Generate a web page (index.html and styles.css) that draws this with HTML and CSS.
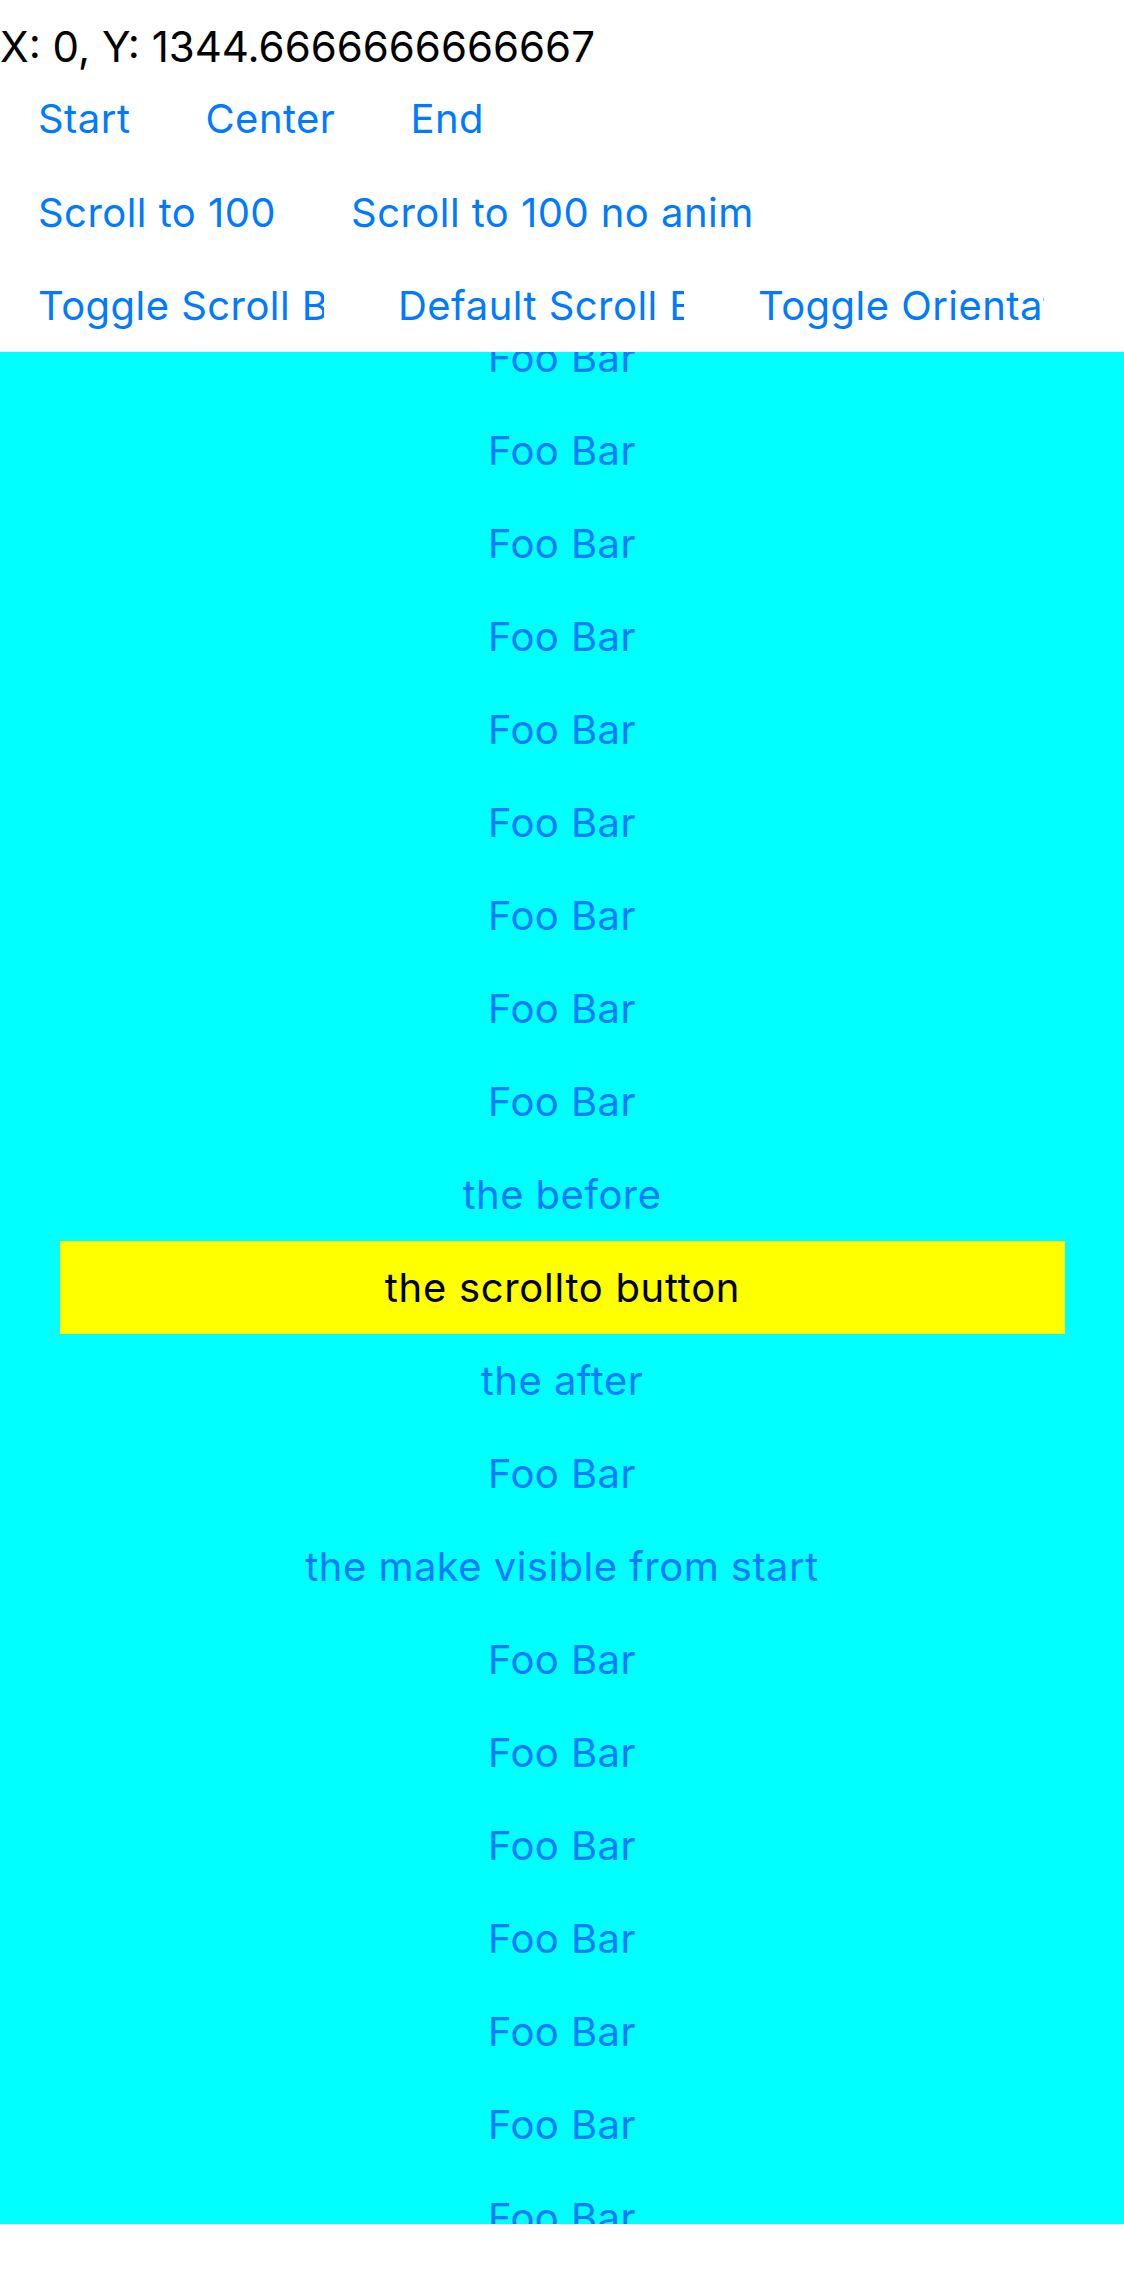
FILE: index.html
```html
<!DOCTYPE html>
<html lang="en">
<head>
<meta charset="utf-8">
<title>ScrollTo</title>
<link rel="stylesheet" href="styles.css">
</head>
<body>
<div class="app">
  <div class="offset">X: 0, Y: 1344.6666666666667</div>
  <div class="btn-row row-first">
    <span class="btn">Start</span>
    <span class="btn">Center</span>
    <span class="btn">End</span>
  </div>
  <div class="btn-row">
    <span class="btn">Scroll to 100</span>
    <span class="btn">Scroll to 100 no anim</span>
  </div>
  <div class="btn-row row-fixed">
    <span class="btn btn-fixed">Toggle Scroll Bars</span>
    <span class="btn btn-fixed">Default Scroll Bars</span>
    <span class="btn btn-fixed">Toggle Orientation</span>
  </div>
  <div class="scroller">
    <div class="list">
      <div class="item">Foo Bar</div>
      <div class="item">Foo Bar</div>
      <div class="item">Foo Bar</div>
      <div class="item">Foo Bar</div>
      <div class="item">Foo Bar</div>
      <div class="item">Foo Bar</div>
      <div class="item">Foo Bar</div>
      <div class="item">Foo Bar</div>
      <div class="item">Foo Bar</div>
      <div class="item">the before</div>
      <div class="item item-target">the scrollto button</div>
      <div class="item">the after</div>
      <div class="item">Foo Bar</div>
      <div class="item">the make visible from start</div>
      <div class="item">Foo Bar</div>
      <div class="item">Foo Bar</div>
      <div class="item">Foo Bar</div>
      <div class="item">Foo Bar</div>
      <div class="item">Foo Bar</div>
      <div class="item">Foo Bar</div>
      <div class="item">Foo Bar</div>
      <div class="item">Foo Bar</div>
    </div>
  </div>
</div>
</body>
</html>
```

FILE: styles.css
```css
html, body {
  margin: 0;
  padding: 0;
  background: #ffffff;
}

.app {
  width: 1124px;
  height: 2286px;
  font-family: Inter, "Noto Sans", "DejaVu Sans", sans-serif;
  overflow: hidden;
}

.offset {
  height: 50px;
  padding-top: 22px;
  line-height: 50px;
  font-size: 42px;
  color: #000000;
  white-space: nowrap;
}

.btn-row {
  display: flex;
  gap: 75px;
  padding-left: 38px;
  height: 93px;
  line-height: 93px;
  font-size: 40px;
  letter-spacing: 0.45px;
  white-space: nowrap;
}

.row-first {
  height: 94px;
}

.row-fixed {
  gap: 74px;
}

.btn {
  color: #007aff;
  flex: none;
}

.btn-fixed {
  width: 286px;
  overflow: hidden;
}

.scroller {
  height: 1872px;
  background: #00ffff;
  overflow: hidden;
}

.list {
  margin-top: -41px;
}

.item {
  height: 93px;
  line-height: 93px;
  font-size: 40px;
  letter-spacing: 0.45px;
  color: #0a7aff;
  text-align: center;
  white-space: nowrap;
}

.item-target {
  margin: 0 59px 0 60px;
  background: #ffff00;
  color: #000000;
  letter-spacing: 0.7px;
}
```
